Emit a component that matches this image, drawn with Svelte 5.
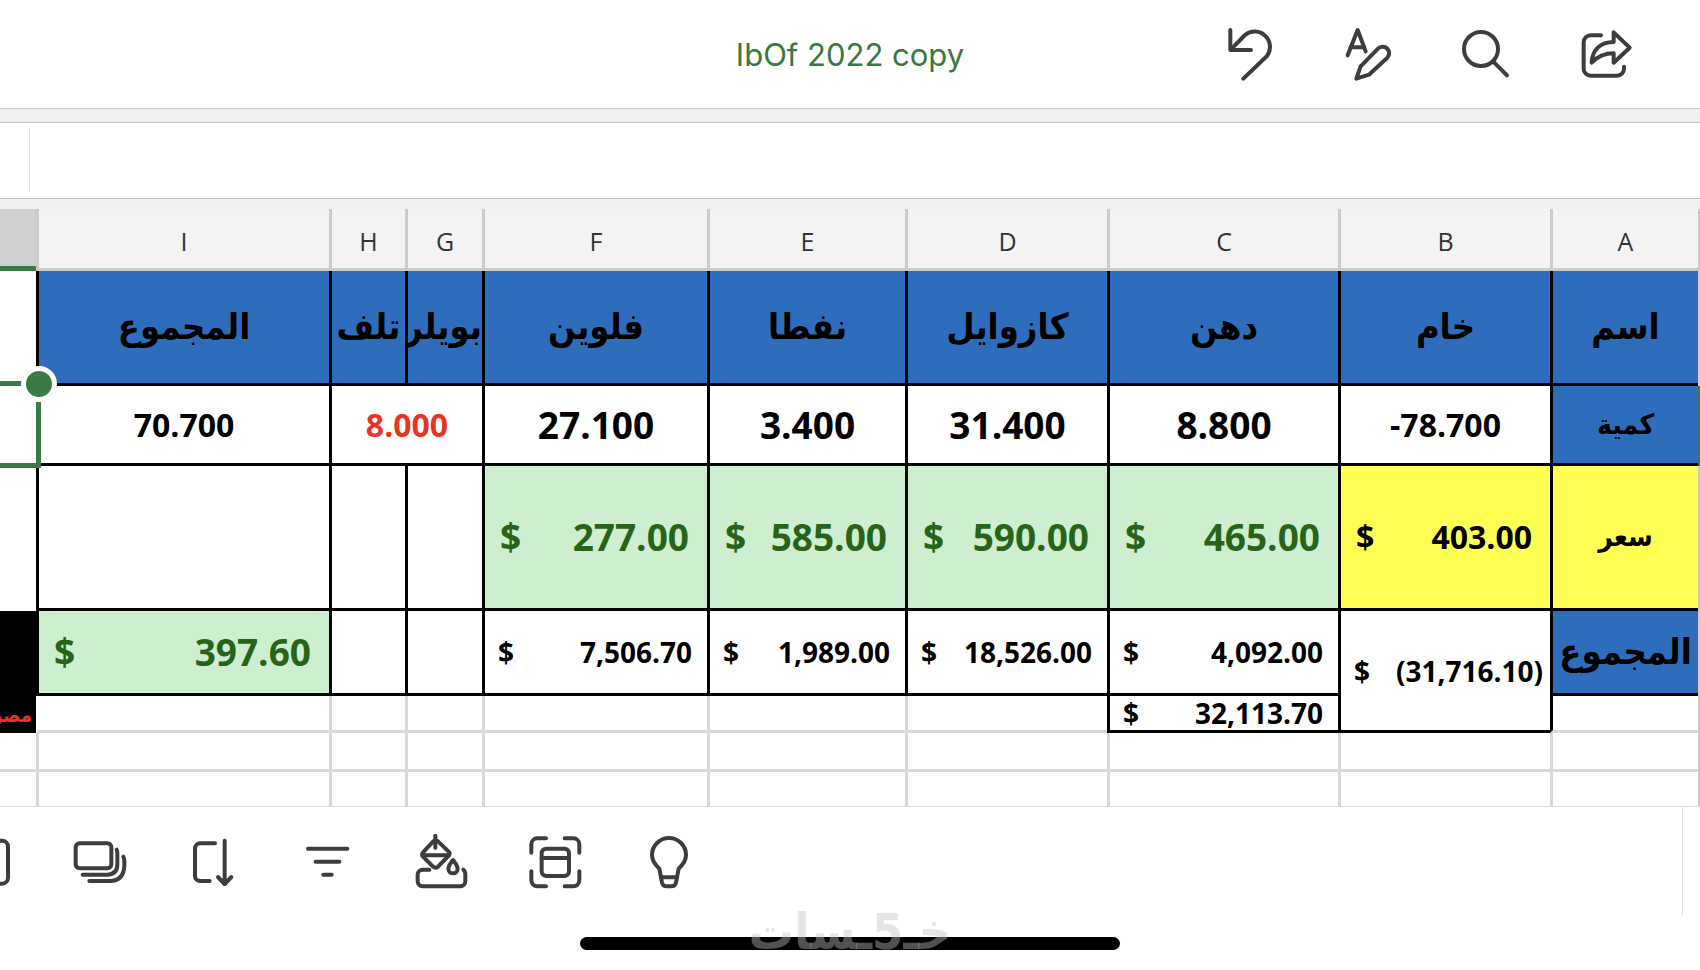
<script>
    const title = "IbOf 2022 copy";

    const actions = [
        {
            label: "Undo",
            box: "60 78 168 168",
            paths: ["M88 90V150H150", "M90 148L132 105A46 46 0 0 1 198 168L127 236"],
        },
        {
            label: "Format",
            box: "422 78 168 168",
            paths: [
                "M445 166L475 90L499 154",
                "M454 142H494",
                "M471 236L484 199L536 146a19 19 0 0 1 28 27L509 224Z",
            ],
        },
        {
            label: "Search",
            box: "777 78 168 168",
            paths: ["M792 147a51 51 0 1 0 102 0a51 51 0 1 0-102 0", "M880 185L921 226"],
        },
        {
            label: "Share",
            box: "1134 78 168 168",
            paths: [
                "M1203 106H1172A21 21 0 0 0 1151 127V206A21 21 0 0 0 1172 227H1251A21 21 0 0 0 1272 206V200",
                "M1241 97L1289 143L1241 188V160C1215 160 1192 170 1175 188C1177 150 1200 126 1241 126Z",
            ],
        },
    ];

    const tools = [
        {
            label: "Keyboard",
            box: "-129 99 168 168",
            paths: ["M-10 119H6a18 18 0 0 1 18 18V230a18 18 0 0 1-18 18H-10"],
        },
        {
            label: "Sheets",
            box: "213 99 168 168",
            paths: [
                "M239 127H322a12 12 0 0 1 12 12V190a12 12 0 0 1-12 12H239a-12 12 0 0 1-12-12V139a12 12 0 0 1 12-12Z",
                "M350 146Q352 150 352 156V190Q352 221 322 221H248",
                "M370 167Q373 172 373 180V194Q371 240 330 240H268",
            ],
        },
        {
            label: "Sort",
            box: "555 99 168 168",
            paths: [
                "M645 127H600a15 15 0 0 0-15 15V225a15 15 0 0 0 15 15H629",
                "M674 119V249",
                "M654 228L674 249L694 228",
            ],
        },
        {
            label: "Filter",
            box: "897 99 168 168",
            paths: ["M924 143H1042", "M947 182H1018", "M970 221H995"],
        },
        {
            label: "Fill color",
            box: "99 99 168 168",
            paths: [
                "M160 121L129 154Q124 161 129 167L159 197Q167 203 174 197L207 163Q211 157 206 152L174 121Q167 115 160 121Z",
                "M131 163H207",
                "M166 104V140",
                "M219 177C211 188 205 195 205 203a14 14 0 0 0 28 0C233 195 227 188 219 177Z",
                "M148 206H128a15 15 0 0 0-15 15V241a15 15 0 0 0 15 15H241a15 15 0 0 0 15-15V221Q256 210 250 206",
            ],
        },
        {
            label: "Card view",
            box: "441 99 168 168",
            paths: [
                "M498 112H472a18 18 0 0 0-18 18V155",
                "M554 112H580a18 18 0 0 1 18 18V155",
                "M454 211V238a18 18 0 0 0 18 18H498",
                "M598 211V238a18 18 0 0 1-18 18H554",
                "M499 143H553a14 14 0 0 1 14 14V211a14 14 0 0 1-14 14H499a14 14 0 0 1-14-14V157a14 14 0 0 1 14-14Z",
                "M485 171H567",
            ],
        },
        {
            label: "Tell me",
            box: "783 99 168 168",
            paths: [
                "M838 203C822 188 816 178 816 162a51 51 0 0 1 102 0C918 178 912 188 896 203L888 245Q885 256 874 256H860Q849 256 846 245Z",
                "M843 229H891",
            ],
        },
    ];

    // the sheet runs right to left, so column A comes first
    const columns = [
        { label: "", width: 2 },
        { label: "A", width: 148 },
        { label: "B", width: 212 },
        { label: "C", width: 231 },
        { label: "D", width: 202 },
        { label: "E", width: 198 },
        { label: "F", width: 225 },
        { label: "G", width: 77 },
        { label: "H", width: 76 },
        { label: "I", width: 293 },
        { label: "", width: 36, class: "active" },
    ];

    const rows = [
        {
            height: 115,
            cells: [
                { class: "edge" },
                { text: "اسم", class: "blue name" },
                { text: "خام", class: "blue name" },
                { text: "دهن", class: "blue name" },
                { text: "كازوايل", class: "blue name" },
                { text: "نفطا", class: "blue name" },
                { text: "فلوين", class: "blue name" },
                { text: "بويلر", class: "blue name" },
                { text: "تلف", class: "blue name" },
                { text: "المجموع", class: "blue name" },
                { class: "outer" },
            ],
        },
        {
            height: 80,
            cells: [
                { class: "edge active" },
                { text: "كمية", class: "blue name small" },
                { text: "-78.700", class: "box medium" },
                { text: "8.800", class: "box large" },
                { text: "31.400", class: "box large" },
                { text: "3.400", class: "box large" },
                { text: "27.100", class: "box large" },
                { text: "8.000", class: "box medium red", colspan: 2 },
                { text: "70.700", class: "box medium" },
                { class: "outer", selected: true },
            ],
        },
        {
            height: 145,
            cells: [
                { class: "edge" },
                { text: "سعر", class: "yellow name small" },
                { amount: "403.00", class: "yellow medium" },
                { amount: "465.00", class: "green large" },
                { amount: "590.00", class: "green large" },
                { amount: "585.00", class: "green large" },
                { amount: "277.00", class: "green large" },
                { class: "box" },
                { class: "box" },
                { class: "box" },
                { class: "outer" },
            ],
        },
        {
            height: 85,
            cells: [
                { class: "edge" },
                { text: "المجموع", class: "blue name" },
                { amount: "(31,716.10)", class: "box regular negative", rowspan: 2 },
                { amount: "4,092.00", class: "box regular" },
                { amount: "18,526.00", class: "box regular" },
                { amount: "1,989.00", class: "box regular" },
                { amount: "7,506.70", class: "box regular" },
                { class: "box" },
                { class: "box" },
                { amount: "397.60", class: "green large" },
                { text: "مصروف", class: "outer note", rowspan: 2 },
            ],
        },
        {
            height: 37,
            cells: [
                { class: "edge" },
                { class: "beside" },
                { amount: "32,113.70", class: "box regular" },
                {},
                {},
                {},
                {},
                {},
                { class: "open" },
            ],
        },
        {
            height: 39,
            cells: [{ class: "edge" }, {}, {}, {}, {}, {}, {}, {}, {}, {}, { class: "outer grid" }],
        },
        {
            height: 34,
            class: "last",
            cells: [{ class: "edge" }, {}, {}, {}, {}, {}, {}, {}, {}, {}, { class: "outer grid" }],
        },
    ];
</script>

{#snippet iconButton(item)}
    <button type="button" aria-label={item.label}>
        <svg viewBox={item.box} aria-hidden="true">
            {#each item.paths as d}
                <path {d} />
            {/each}
        </svg>
    </button>
{/snippet}

<div class="app">
    <header>
        <h1>{title}</h1>
        <div class="actions">
            {#each actions as action}
                {@render iconButton(action)}
            {/each}
        </div>
    </header>

    <div class="formula-bar">
        <span class="divider"></span>
        <input type="text" aria-label="Formula" />
    </div>

    <main>
        <table dir="rtl">
            <colgroup>
                {#each columns as column}
                    <col style="width: {column.width}px" />
                {/each}
            </colgroup>
            <thead>
                <tr>
                    {#each columns as column}
                        <th class={column.class}>{column.label}</th>
                    {/each}
                </tr>
            </thead>
            <tbody>
                {#each rows as row}
                    <tr class={row.class} style="height: {row.height}px">
                        {#each row.cells as cell}
                            <td class={cell.class} colspan={cell.colspan} rowspan={cell.rowspan}>
                                {#if cell.amount}
                                    <div class="amount">
                                        <span>$</span>
                                        <span>{cell.amount}</span>
                                    </div>
                                {:else if cell.selected}
                                    <div class="selection"></div>
                                    <div class="handle"></div>
                                {:else if cell.text}
                                    <div class="text">{cell.text}</div>
                                {/if}
                            </td>
                        {/each}
                    </tr>
                {/each}
            </tbody>
        </table>
    </main>

    <footer>
        <div class="toolbar">
            <div class="tools">
                {#each tools as tool}
                    {@render iconButton(tool)}
                {/each}
            </div>
        </div>
        <div class="home">
            <div class="indicator"></div>
            <div class="watermark" dir="rtl">خـ5ـسات</div>
        </div>
    </footer>
</div>

<style>
    :global(body) {
        margin: 0;
        background-color: white;
    }
    .app {
        overflow: hidden;
        background-color: white;
        color: black;
        font-family: "Open Sans", "DejaVu Sans", sans-serif;
    }

    button {
        display: block;
        width: 56px;
        height: 56px;
        padding: 0;
        border: none;
        background: none;
        cursor: pointer;
    }
    svg {
        display: block;
        width: 100%;
        height: 100%;
        fill: none;
        stroke: #3d3d3d;
        stroke-width: 12;
        stroke-linecap: round;
        stroke-linejoin: round;
    }

    header {
        display: grid;
        grid-template-columns: 1fr auto 1fr;
        align-items: center;
        height: 108px;
        border-bottom: 1px solid #c8c8c8;
    }
    h1 {
        grid-column: 2;
        margin: 0;
        padding-top: 2px;
        color: #357a3c;
        font-family: Inter, sans-serif;
        font-size: 31px;
        font-weight: 400;
        line-height: 40px;
    }
    .actions {
        display: flex;
        justify-content: flex-end;
        gap: 63px;
        padding-right: 66px;
    }

    .formula-bar {
        display: flex;
        height: 77px;
        border: solid #f0f0f0;
        border-width: 13px 0 10px;
        box-shadow: inset 0 1px #c0c0c0, inset 0 -1px #c0c0c0;
    }
    .divider {
        width: 29px;
        margin: 7px 0;
        border-right: 1px solid #dedede;
    }
    .formula-bar input {
        flex: 1;
        margin: 1px 0;
        padding: 0 16px;
        border: none;
        outline: none;
        background: none;
        font-size: 28px;
    }

    table {
        width: 100%;
        table-layout: fixed;
        border-collapse: separate;
        border-spacing: 0;
    }
    th {
        box-sizing: border-box;
        height: 62px;
        padding: 4px 0 0;
        border: solid #cbcbcb;
        border-width: 0 0 3px 3px;
        background-color: #f3f3f3;
        color: #333;
        font-size: 25px;
        font-weight: 400;
        line-height: 32px;
    }
    th.active {
        border-bottom: 5px solid #3c7a45;
        border-left: none;
        background-color: #cfcfcf;
    }
    td {
        box-sizing: border-box;
        padding: 0;
        border: solid #d9d9d9;
        border-width: 0 0 3px 3px;
        font-weight: 700;
        text-align: center;
        white-space: nowrap;
    }
    .last td {
        border-bottom: none;
    }
    td.blue,
    td.yellow,
    td.green,
    td.box {
        border-color: black;
    }
    td.blue {
        background-color: #2e6dbc;
    }
    td.yellow {
        background-color: #ffff54;
    }
    td.green {
        background-color: #ceeed0;
        color: #276418;
    }
    td.red {
        color: #ea3323;
    }
    td.edge {
        border: none;
        background-color: #cbcbcb;
    }
    td.edge.active {
        background-color: #3c7a45;
    }
    td.beside {
        border-left-color: black;
    }
    td.open {
        border-left-color: white;
    }
    td.outer {
        position: relative;
        border: none;
    }
    td.outer.grid {
        border-bottom: 3px solid #d9d9d9;
    }
    .last td.outer.grid {
        border-bottom: none;
    }

    .text {
        direction: ltr;
        line-height: 48px;
    }
    .name .text {
        overflow: hidden;
        direction: rtl;
        font-family: "DejaVu Sans Condensed", "DejaVu Sans", sans-serif;
        font-size: 36px;
        line-height: 64px;
    }
    .small .text {
        font-size: 28px;
    }
    td.note {
        background-color: black;
        color: #ea3323;
        vertical-align: bottom;
    }
    .note .text {
        padding-right: 4px;
        direction: rtl;
        font-family: "DejaVu Sans Condensed", "DejaVu Sans", sans-serif;
        font-size: 20px;
        line-height: 36px;
        text-align: right;
    }

    .large {
        font-size: 37px;
    }
    .medium {
        font-size: 32px;
    }
    .regular {
        font-size: 28px;
    }
    .amount {
        display: flex;
        justify-content: space-between;
        padding: 0 18px 0 15px;
        direction: ltr;
        line-height: 34px;
    }
    .regular .amount {
        padding: 0 15px 0 13px;
    }
    .negative .amount {
        padding-right: 7px;
    }

    .selection {
        position: absolute;
        inset: -5px -5px -2px 0;
        border: 5px solid #3c7a45;
        border-left: none;
    }
    .handle {
        position: absolute;
        top: -20px;
        left: 21px;
        width: 26px;
        height: 26px;
        border: 5px solid white;
        border-radius: 50%;
        background-color: #3c7a45;
    }

    footer {
        border-top: 1px solid #dedede;
    }
    .toolbar {
        display: flex;
        align-items: center;
        height: 109px;
        margin-right: 17px;
        border-right: 1px solid #dedede;
    }
    .tools {
        display: flex;
        gap: 58px;
        margin-left: -43px;
    }
    .home {
        position: relative;
        display: flex;
        justify-content: center;
        height: 34px;
        padding-bottom: 20px;
    }
    .indicator {
        align-self: flex-end;
        width: 540px;
        height: 13px;
        border-radius: 7px;
        background-color: black;
    }
    .watermark {
        position: absolute;
        inset: -14px 0 0;
        color: rgba(192, 192, 192, 0.42);
        font-family: "DejaVu Sans Condensed", "DejaVu Sans", sans-serif;
        font-size: 50px;
        font-weight: 700;
        line-height: 60px;
        text-align: center;
    }
</style>
